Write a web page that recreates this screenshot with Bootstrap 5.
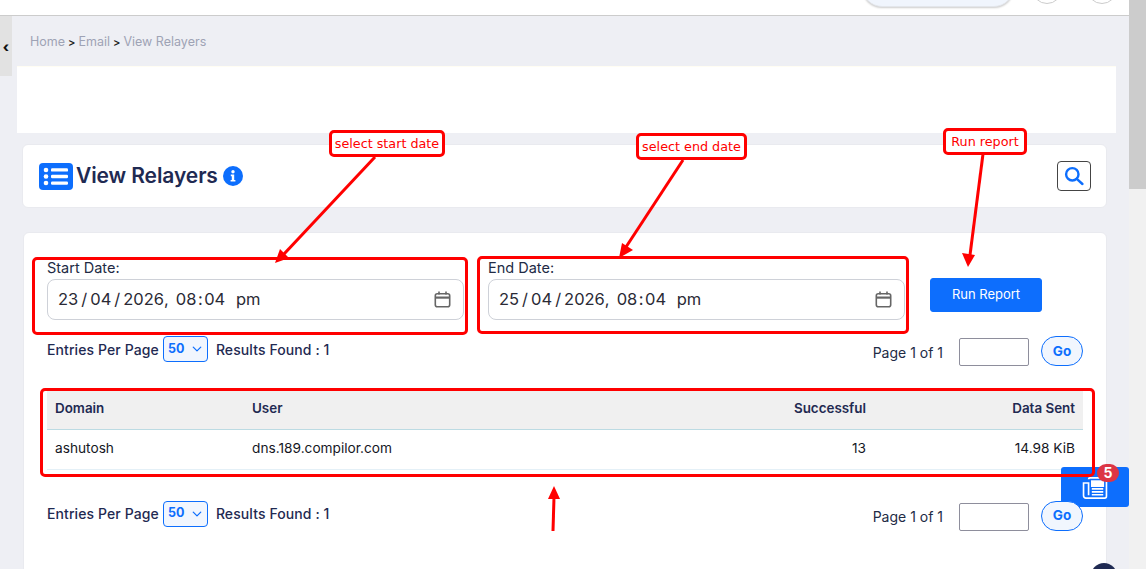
<!DOCTYPE html>
<html lang="en">
<head>
<meta charset="utf-8">
<title>View Relayers</title>
<link href="https://cdn.jsdelivr.net/npm/bootstrap@5.3.0/dist/css/bootstrap.min.css" rel="stylesheet">
<style>
html,body{height:569px;overflow:hidden}
body{background:#eeeff4;font-family:Inter,"Open Sans",sans-serif;color:#1f2a52;font-size:13.5px}
.shell{width:1146px;height:569px;position:relative;overflow:hidden}
.pagecol{width:1129px;height:569px;overflow:hidden}
.scrolltrack{width:17px;height:569px;background:#f1f1f1}
.scrollthumb{height:189px;background:#ccc}
.topstrip{height:16px;background:#fff;border-bottom:1px solid #ccc;overflow:hidden;padding-right:12px}
.toppill{width:152px;height:40px;background:#f0f5fd;border:1px solid #e3e6eb;border-radius:20px;box-shadow:0 1px 2px rgba(0,0,0,.2);margin-right:18px;margin-bottom:8px;flex:none}
.topdot{width:30px;height:30px;background:#fff;border:1px solid #ccc;border-radius:50%;margin-bottom:11px;flex:none}
.topdot+.topdot{margin-left:25px}
.sidetab{width:12px;height:60px;background:#e2e2e2;flex:none;font-size:14px;font-weight:800;color:#111;padding-top:21px;line-height:20px;text-align:center}
.crumbs{height:50px;padding:18px 0 0 18px;font-size:12.5px;line-height:16px;color:#9ea3b5}
.crumbs .sep{color:#222;margin:0 3px;font-size:11px;font-weight:600}
.banner{margin-left:5px;width:1099px;height:67px;background:#fff;border-top:1px solid #fffdf3}
.titlecard{margin:11px 0 0 10px;width:1085px;height:64px;border:1px solid #e9eaef;border-radius:6px;padding:0 15px 0 16px}
.titletext{font-size:21px;font-weight:600;line-height:28px;margin:0 5px 0 3px;color:#1f2a52;letter-spacing:-.1px}
.searchbtn{width:34px;height:30px;border:1px solid #444;border-radius:4px;background:#fff;padding:0}
.maincard{margin:24px 0 0 11px;width:1084px;height:400px;border:1px solid #e9eaef;border-radius:6px 6px 0 0;padding:26px 23px 0 23px}
.fieldlabel{font-size:14.5px;line-height:18px;color:#222b45;margin:0 0 2px 0}
.datebox{width:417px;height:41px;border:1px solid #ced1d8;border-radius:8px;padding:0 12px 0 10px;font-size:16.5px;color:#2a2a35}
.datebox .sl{margin:0 3px}
.datebox .tc{margin:0 1.5px}
.datebox .gp{margin-right:7px}
.datebox .ap{margin-left:6px}
.runbtn{width:112px;height:34px;background:#0d6efd;font-size:13px;border-radius:3px;margin:19px 0 0 25px;padding:0}
.pager{height:30px}
.lowerpager{margin-top:31px}
.entrylabel{font-weight:500;font-size:14px;letter-spacing:.1px;color:#1f2a52;margin-bottom:4px}
.perpage{width:45px;height:26px;padding:0 0 0 4px;margin:0 8px 4px 4px;font-size:12.5px;font-weight:700;color:#0d6efd;background-color:#f1f6fe;border:1px solid #0d6efd;border-radius:4px;background-position:right 4px center;background-size:12px 10px;background-image:url("data:image/svg+xml,%3csvg xmlns='http://www.w3.org/2000/svg' viewBox='0 0 16 16'%3e%3cpath fill='none' stroke='%230d6efd' stroke-linecap='round' stroke-linejoin='round' stroke-width='2' d='m2 5 6 6 6-6'/%3e%3c/svg%3e")}
.pagelabel{font-size:14px;color:#222b45;margin:2px 16px 0 0}
.pageinput{width:70px;height:28px;border:1px solid #8e8e9c;border-radius:2px;padding:0 4px;margin-top:2px}
.gobtn{width:42px;height:30px;margin-left:12px;border:1px solid #0d6efd;border-radius:15px;background:#f1f6fe;color:#0d6efd;font-weight:700;font-size:13.5px;padding:0;position:relative;z-index:1}
.reltable{margin:0;font-size:13.7px}
.reltable th{background:#f0f0f0;height:39px;padding:0 8px 3px;vertical-align:middle;font-weight:600;font-size:13.4px;color:#1f2a52;border-bottom:1px solid #bcdbe3}
.reltable td{height:40px;padding:0 8px 2px;vertical-align:middle;color:#15171f;border-bottom:1px solid #e4f0f7}
.colone{width:197px}
.colthree{width:124px}
.colfour{width:209px}
.notice{position:absolute;left:1061px;top:467px;width:68px;height:40px;background:#0d6efd;border-radius:3px}
.noticeicon{position:absolute;left:21px;top:10px}
.noticecount{position:absolute;left:36px;top:-3px;width:22px;height:18px;border-radius:9px;background:#dc3545;color:#fff;font-size:14px;font-weight:700;line-height:18px;text-align:center}
.helpdot{position:absolute;left:1091px;top:563px;width:26px;height:26px;border-radius:50%;background:#1f2a52}
.markbox{position:absolute;border:3px solid #f00;border-radius:5px}
.marklabel{position:absolute;border:3px solid #f00;border-radius:5px;background:#fff;color:#f00;font-family:"DejaVu Sans",sans-serif;font-size:12.75px;line-height:22px;white-space:nowrap;text-align:center}
.markone{left:329px;top:130px;width:116px;height:27px}
.marktwo{left:636px;top:133px;width:111px;height:27px}
.markthree{left:943px;top:128px;width:84px;height:27px}
.rectstart{left:32px;top:257px;width:436px;height:78px}
.rectend{left:477px;top:256px;width:432px;height:78px}
.recttable{left:40px;top:388px;width:1055px;height:89px}
.arrows{position:absolute;left:0;top:0;pointer-events:none}
</style>
</head>
<body>
<div class="shell d-flex">
  <div class="pagecol">
    <div class="topstrip d-flex justify-content-end align-items-end">
      <div class="toppill"></div>
      <div class="topdot"></div>
      <div class="topdot"></div>
    </div>
    <div class="d-flex">
      <div class="sidetab">‹</div>
      <div class="flex-grow-1">
        <div class="crumbs">Home<span class="sep">&gt;</span>Email<span class="sep">&gt;</span>View Relayers</div>
        <div class="banner"></div>
        <div class="titlecard bg-white d-flex align-items-center">
          <svg width="34" height="27" viewBox="0 0 34 27"><rect width="34" height="27" rx="4" fill="#0d6efd"/><g fill="#fff"><circle cx="7" cy="7" r="2.3"/><circle cx="7" cy="13.5" r="2.3"/><circle cx="7" cy="20" r="2.3"/><rect x="12" y="5.2" width="17" height="3.4" rx="1.2"/><rect x="12" y="11.8" width="17" height="3.4" rx="1.2"/><rect x="12" y="18.4" width="17" height="3.4" rx="1.2"/></g></svg>
          <h1 class="titletext">View Relayers</h1>
          <svg width="20" height="20" viewBox="0 0 20 20"><circle cx="10" cy="10" r="10" fill="#0d6efd"/><circle cx="10" cy="5.8" r="1.7" fill="#fff"/><path d="M7.8 8.6h3.4v5.4h1.2v1.6H7.6V14h1.2v-3.8h-1z" fill="#fff"/></svg>
          <button class="searchbtn ms-auto d-flex align-items-center justify-content-center" type="button" aria-label="Search">
            <svg width="20" height="20" viewBox="0 0 20 20" fill="none" stroke="#0d6efd" stroke-width="2.4"><circle cx="8.3" cy="8.3" r="6.2"/><path d="M12.8 12.8l5.6 5.2" stroke-linecap="round"/></svg>
          </button>
        </div>
        <div class="maincard bg-white">
          <div class="d-flex">
            <div>
              <div class="fieldlabel">Start Date:</div>
              <div class="datebox d-flex align-items-center">
                <span>23</span><span class="sl">/</span><span>04</span><span class="sl">/</span><span>2026</span><span class="gp">,</span><span>08</span><span class="tc">:</span><span>04</span><span class="ap">&nbsp;pm</span>
                <svg class="ms-auto" width="17" height="17" viewBox="0 0 17 17" fill="none" stroke="#666" stroke-width="1.6"><rect x="1.3" y="2.8" width="14.4" height="13" rx="2"/><path d="M1.3 6.6h14.4" stroke-width="2.2"/><path d="M5 .6v3M12 .6v3"/></svg>
              </div>
            </div>
            <div class="ms-4">
              <div class="fieldlabel">End Date:</div>
              <div class="datebox d-flex align-items-center">
                <span>25</span><span class="sl">/</span><span>04</span><span class="sl">/</span><span>2026</span><span class="gp">,</span><span>08</span><span class="tc">:</span><span>04</span><span class="ap">&nbsp;pm</span>
                <svg class="ms-auto" width="17" height="17" viewBox="0 0 17 17" fill="none" stroke="#666" stroke-width="1.6"><rect x="1.3" y="2.8" width="14.4" height="13" rx="2"/><path d="M1.3 6.6h14.4" stroke-width="2.2"/><path d="M5 .6v3M12 .6v3"/></svg>
              </div>
            </div>
            <button class="btn btn-primary runbtn" type="button">Run Report</button>
          </div>
          <div class="pager d-flex align-items-center mt-3">
            <span class="entrylabel">Entries Per Page</span>
            <select class="form-select perpage" aria-label="Entries per page"><option>50</option></select>
            <span class="entrylabel">Results Found : 1</span>
            <span class="pagelabel ms-auto">Page 1 of 1</span>
            <input class="pageinput" type="text" aria-label="Page">
            <button class="gobtn" type="button">Go</button>
          </div>
          <table class="table reltable mt-4">
            <thead><tr><th class="colone">Domain</th><th>User</th><th class="colthree text-end">Successful</th><th class="colfour text-end">Data Sent</th></tr></thead>
            <tbody><tr><td>ashutosh</td><td>dns.189.compilor.com</td><td class="text-end">13</td><td class="text-end">14.98 KiB</td></tr></tbody>
          </table>
          <div class="pager lowerpager d-flex align-items-center">
            <span class="entrylabel">Entries Per Page</span>
            <select class="form-select perpage" aria-label="Entries per page"><option>50</option></select>
            <span class="entrylabel">Results Found : 1</span>
            <span class="pagelabel ms-auto">Page 1 of 1</span>
            <input class="pageinput" type="text" aria-label="Page">
            <button class="gobtn" type="button">Go</button>
          </div>
        </div>
      </div>
    </div>
  </div>
  <div class="scrolltrack"><div class="scrollthumb"></div></div>

  <div class="notice">
    <svg class="noticeicon" width="26" height="22" viewBox="0 0 28 24" fill="none" stroke="#fff" stroke-width="1.8"><path d="M7 2.5a1.5 1.5 0 0 1 1.5-1.5H25a1.5 1.5 0 0 1 1.5 1.5V21a2 2 0 0 1-2 2H4a2.5 2.5 0 0 1-2.5-2.5V6.5H7V20"/><rect x="10.5" y="4.5" width="12.5" height="5.5" fill="#fff"/><path d="M10.5 13h12.5M10.5 16.2h12.5M10.5 19.4h12.5"/></svg>
    <span class="noticecount">5</span>
  </div>
  <div class="helpdot"></div>

  <div class="markbox rectstart"></div>
  <div class="markbox rectend"></div>
  <div class="markbox recttable"></div>
  <svg class="arrows" width="1146" height="569" viewBox="0 0 1146 569">
    <g stroke="#f00" stroke-width="3" fill="#f00">
      <path d="M375 157L284 254"/><path d="M275 263l5-14 9 9z" stroke="none"/>
      <path d="M683 160L626 247"/><path d="M619 258l3-15 11 7z" stroke="none"/>
      <path d="M983 154L970 255"/><path d="M968 267l-6-14 13 2z" stroke="none"/>
      <path d="M553 531L554 497"/><path d="M554 486l6 13h-12z" stroke="none"/>
    </g>
  </svg>
  <div class="marklabel markone">select start date</div>
  <div class="marklabel marktwo">select end date</div>
  <div class="marklabel markthree">Run report</div>
</div>
<script src="https://cdn.jsdelivr.net/npm/bootstrap@5.3.0/dist/js/bootstrap.bundle.min.js"></script>
</body>
</html>
